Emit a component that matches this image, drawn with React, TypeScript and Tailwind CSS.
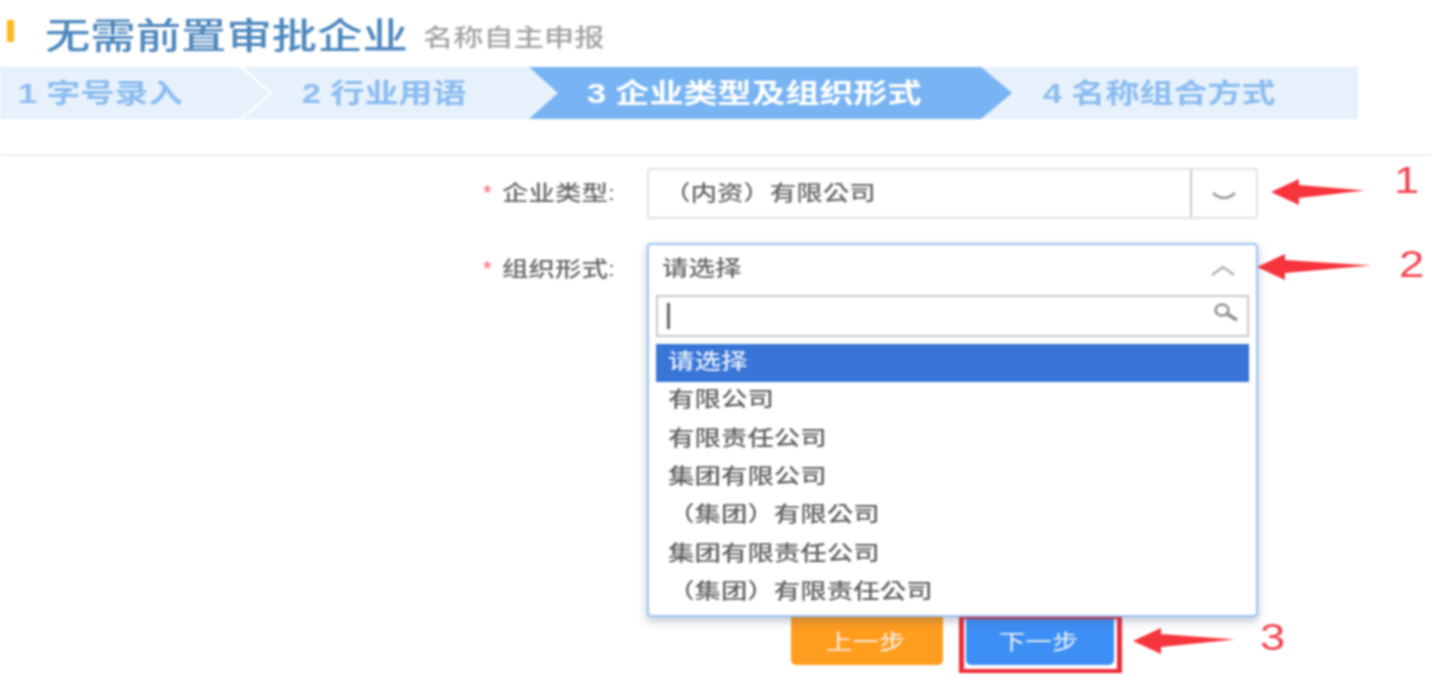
import React from "react";

function T({ className = "", children }: { className?: string; children: React.ReactNode }) {
  return <span className={"inline-block origin-left scale-x-[1.26] whitespace-nowrap " + className}>{children}</span>;
}

function Arrow({ className, width, tail }: { className: string; width: number; tail: number }) {
  return (
    <svg className={"absolute " + className} width={width} height={26} viewBox={`0 0 ${width} 26`}>
      <polygon points={`0,13 ${tail},0 ${tail},6 ${width},11.5 ${tail},19 ${tail},26`} fill="#f5343c" />
    </svg>
  );
}

const options = ["有限公司", "有限责任公司", "集团有限公司", "（集团）有限公司", "集团有限责任公司", "（集团）有限责任公司"];

export default function App() {
  return (
    <div className="relative h-[687px] w-[1432px] overflow-hidden bg-white font-['Liberation_Sans','Noto_Sans_CJK_SC',sans-serif] [filter:blur(1px)]">
      {/* Title */}
      <div className="flex h-[67px] items-center pl-[7px]">
        <div className="mb-[6px] h-[22px] w-[7px] bg-[#fdb81e]" />
        <div className="ml-[31px] mt-[7px] w-[378px] text-[36px] font-medium leading-none text-[#4d87bd]"><T>无需前置审批企业</T></div>
        <div className="mt-[8px] text-[24px] font-medium leading-none text-[#a3a3a3]"><T>名称自主申报</T></div>
      </div>

      {/* Stepper */}
      <div className="relative flex h-[52px] w-[1358px] items-center bg-[#e6f1fc] pt-[2px] text-[27px] font-bold leading-none text-[#8bbcf0]">
        <div className="w-[287px] pl-[18px]"><T>1 字号录入</T></div>
        <div className="w-[242px] pl-[15px]"><T>2 行业用语</T></div>
        <div className="-mt-[2px] flex h-[52px] w-[483px] items-center bg-[#78b4f3] pl-[58px] pt-[2px] text-white [clip-path:polygon(0_0,452px_0,100%_50%,452px_100%,0_100%,29px_50%)]">
          <T>3 企业类型及组织形式</T>
        </div>
        <div className="pl-[31px]"><T>4 名称组合方式</T></div>
        <svg className="absolute left-[240px] top-0" width="34" height="52" viewBox="0 0 34 52">
          <polyline points="1,0 31,26 1,52" fill="none" stroke="#ffffff" strokeWidth="2" />
        </svg>
      </div>

      <div className="mt-[35px] h-[2px] bg-[#ececec]" />

      {/* Form */}
      <div className="flex flex-col gap-[24px] pt-[12px] text-[21px] font-medium leading-none">
        <div className="flex items-center">
          <div className="flex w-[647px] items-center pb-[2px] pl-[483px] text-[#666]">
            <span className="w-[19px] text-[22px] text-[#f8606c]">*</span>
            <T>企业类型:</T>
          </div>
          <div className="flex h-[51px] w-[611px] items-center rounded-[4px] border-2 border-[#e2e2e2] text-[#666]">
            <div className="flex-1 pb-[2px] pl-[15px]"><T className="font-['Liberation_Sans','Noto_Sans_CJK_TC',sans-serif]">（内资）有限公司</T></div>
            <div className="flex h-full w-[66px] items-center justify-center border-l-2 border-[#c9c9c9]">
              <svg width="24" height="10" viewBox="0 0 24 10" className="mt-[5px]"><path d="M1 2 Q12 12 23 2" fill="none" stroke="#9b9b9b" strokeWidth="2.5" /></svg>
            </div>
          </div>
        </div>

        <div className="flex items-start">
          <div className="flex h-[51px] w-[647px] items-center pl-[483px] text-[#666]">
            <span className="w-[19px] text-[22px] text-[#f8606c]">*</span>
            <T>组织形式:</T>
          </div>
          <div className="relative h-[51px] w-[611px]">
            <div className="absolute inset-x-0 top-0 z-10 h-[374px] rounded-[4px] border-2 border-[#9cc2f5] bg-white px-[7px] shadow-[0_4px_10px_rgba(70,90,120,0.35)]">
              <div className="flex h-[50px] items-center justify-between pb-[6px] pl-[6px] pr-[14px] text-[#666]">
                <T>请选择</T>
                <svg width="24" height="10" viewBox="0 0 24 10" className="mt-[8px]"><path d="M1 9 L12 1 L23 9" fill="none" stroke="#b0b0b0" strokeWidth="2.5" /></svg>
              </div>
              <div className="flex h-[42px] items-center justify-between border-2 border-[#c9c9c9] pl-[9px] pr-[9px]">
                <div className="h-[26px] w-[3px] bg-[#666]" />
                <svg width="24" height="20" viewBox="0 0 24 20" className="-mt-[6px]">
                  <ellipse cx="8" cy="7" rx="6.5" ry="5.5" fill="none" stroke="#8e8e8e" strokeWidth="2.5" />
                  <line x1="13" y1="11" x2="23" y2="17" stroke="#8e8e8e" strokeWidth="3.5" />
                </svg>
              </div>
              <div className="mt-[7px] flex h-[38px] items-center bg-[#3875d7] pb-[5px] pl-[12px] text-[#e6eefa]"><T>请选择</T></div>
              {options.map((o) => (
                <div key={o} className="flex h-[38.4px] items-center pb-[5px] pl-[12px] text-[#5f5f5f]">
                  <T className={o.startsWith("（") ? "font-['Liberation_Sans','Noto_Sans_CJK_TC',sans-serif]" : ""}>{o}</T>
                </div>
              ))}
            </div>
          </div>
        </div>
      </div>

      {/* Buttons */}
      <div className="ml-[791px] mt-[323px] flex gap-[23px] text-[21px] leading-none text-[#f3f3f3]">
        <div className="flex h-[48px] w-[152px] items-center justify-center rounded-b-[5px] bg-[#ff9d1e] pr-[20px]"><T>上一步</T></div>
        <div className="relative flex h-[48px] w-[148px] items-center justify-center rounded-b-[5px] bg-[#3d8ff5] pr-[20px]">
          <T>下一步</T>
          <div className="absolute -left-[7px] -right-[8px] -top-[2px] h-[58px] border-x-[5px] border-y-[4px] border-[#ee2a35]" />
        </div>
      </div>

      {/* Annotations */}
      <Arrow className="left-[1271px] top-[179px]" width={94} tail={28} />
      <Arrow className="left-[1257px] top-[254px]" width={114} tail={28} />
      <Arrow className="left-[1133px] top-[628px]" width={102} tail={28} />
      <div className="absolute left-[1394px] top-[163px] text-[36px] leading-none text-[#f0424f]"><T>1</T></div>
      <div className="absolute left-[1399px] top-[247px] text-[36px] leading-none text-[#f0424f]"><T>2</T></div>
      <div className="absolute left-[1260px] top-[620px] text-[36px] leading-none text-[#f0424f]"><T>3</T></div>
    </div>
  );
}
